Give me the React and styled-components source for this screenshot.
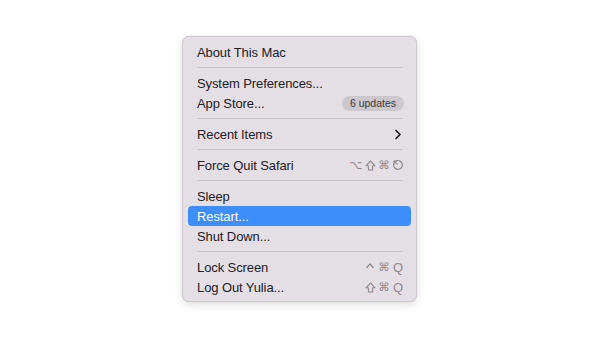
import React from 'react'
import styled, { createGlobalStyle } from 'styled-components'

const GlobalStyle = createGlobalStyle`
    html, body {
        margin: 0;
        padding: 0;
        background: #ffffff;
    }
    body {
        font-family: "Liberation Sans", Arial, sans-serif;
        -webkit-font-smoothing: antialiased;
    }
`

const Page = styled.div`
    width: 608px;
    height: 351px;
    display: flex;
    justify-content: flex-start;
    align-items: flex-start;
    padding: 36px 0 0 182px;
    box-sizing: border-box;
`

const Menu = styled.div`
    width: 235px;
    box-sizing: border-box;
    padding: 5px 5px 4px 5px;
    background: #e4dee5;
    border: 1px solid #cfc9d0;
    border-radius: 7px;
    box-shadow: 0 3px 10px rgba(0, 0, 0, 0.12), 0 0 1px rgba(0, 0, 0, 0.2);
    display: flex;
    flex-direction: column;
`

const Row = styled.div`
    height: 20px;
    display: flex;
    align-items: center;
    justify-content: space-between;
    padding: 0 9px 0 9px;
    border-radius: 4px;
    font-size: 13px;
    letter-spacing: -0.1px;
    color: ${({ $active }) => ($active ? '#ffffff' : '#232124')};
    background: ${({ $active }) => ($active ? '#3d8ef8' : 'transparent')};
`

const Separator = styled.div`
    height: 1px;
    margin: 5px 8px 5px 9px;
    background: #c8c2c9;
`

const Badge = styled.span`
    height: 15px;
    padding: 0 8px;
    margin-right: -2px;
    border-radius: 8px;
    background: #cdc7ce;
    color: #3b393c;
    font-size: 10.5px;
    line-height: 15px;
    letter-spacing: 0;
`

const Keys = styled.span`
    display: flex;
    align-items: center;
    gap: 2px;
    color: #8f8a90;
    margin-right: -2px;
`

const Key = styled.span`
    width: 12px;
    height: 14px;
    display: flex;
    align-items: center;
    justify-content: center;
    font-family: ${({ $text }) => ($text ? '"Liberation Sans", Arial, sans-serif' : '"DejaVu Sans", sans-serif')};
    font-size: ${({ $text }) => ($text ? '13px' : '11.5px')};
`

const stroke = {
    fill: 'none',
    stroke: '#8f8a90',
    strokeWidth: 1.2,
    strokeLinecap: 'round',
    strokeLinejoin: 'round',
}

const EscIcon = () => (
    <svg width="12" height="12" viewBox="0 0 12 12" {...stroke}>
        <path d="M4.2 1.9 A4.4 4.4 0 1 1 1.9 4.2" />
        <path d="M2.2 2.2 L5.2 5.2" />
        <path d="M2.2 4.6 V2.2 H4.6" />
    </svg>
)

const ShiftIcon = () => (
    <svg width="11" height="11" viewBox="0 0 11 11" {...stroke} strokeWidth="1.1">
        <path d="M5.5 1 L10 5.8 H7.6 V10 H3.4 V5.8 H1 Z" />
    </svg>
)

const CaretIcon = () => (
    <svg width="10" height="11" viewBox="0 0 10 11" {...stroke}>
        <path d="M1.8 5.5 L5 2 L8.2 5.5" />
    </svg>
)

const Chevron = () => (
    <svg width="8" height="11" viewBox="0 0 8 11" fill="none" stroke="#1f1d20" strokeWidth="1.7" strokeLinecap="round" strokeLinejoin="round">
        <path d="M2 1.5 L6 5.5 L2 9.5" />
    </svg>
)

export default function App() {
    return (
        <>
            <GlobalStyle />
            <Page>
                <Menu>
                    <Row>About This Mac</Row>
                    <Separator />
                    <Row>System Preferences...</Row>
                    <Row>
                        App Store...
                        <Badge>6 updates</Badge>
                    </Row>
                    <Separator />
                    <Row>
                        Recent Items
                        <Chevron />
                    </Row>
                    <Separator />
                    <Row>
                        Force Quit Safari
                        <Keys>
                            <Key>⌥</Key>
                            <Key><ShiftIcon /></Key>
                            <Key>⌘</Key>
                            <Key><EscIcon /></Key>
                        </Keys>
                    </Row>
                    <Separator />
                    <Row>Sleep</Row>
                    <Row $active>Restart...</Row>
                    <Row>Shut Down...</Row>
                    <Separator />
                    <Row>
                        Lock Screen
                        <Keys>
                            <Key><CaretIcon /></Key>
                            <Key>⌘</Key>
                            <Key $text>Q</Key>
                        </Keys>
                    </Row>
                    <Row>
                        Log Out Yulia...
                        <Keys>
                            <Key><ShiftIcon /></Key>
                            <Key>⌘</Key>
                            <Key $text>Q</Key>
                        </Keys>
                    </Row>
                </Menu>
            </Page>
        </>
    )
}
